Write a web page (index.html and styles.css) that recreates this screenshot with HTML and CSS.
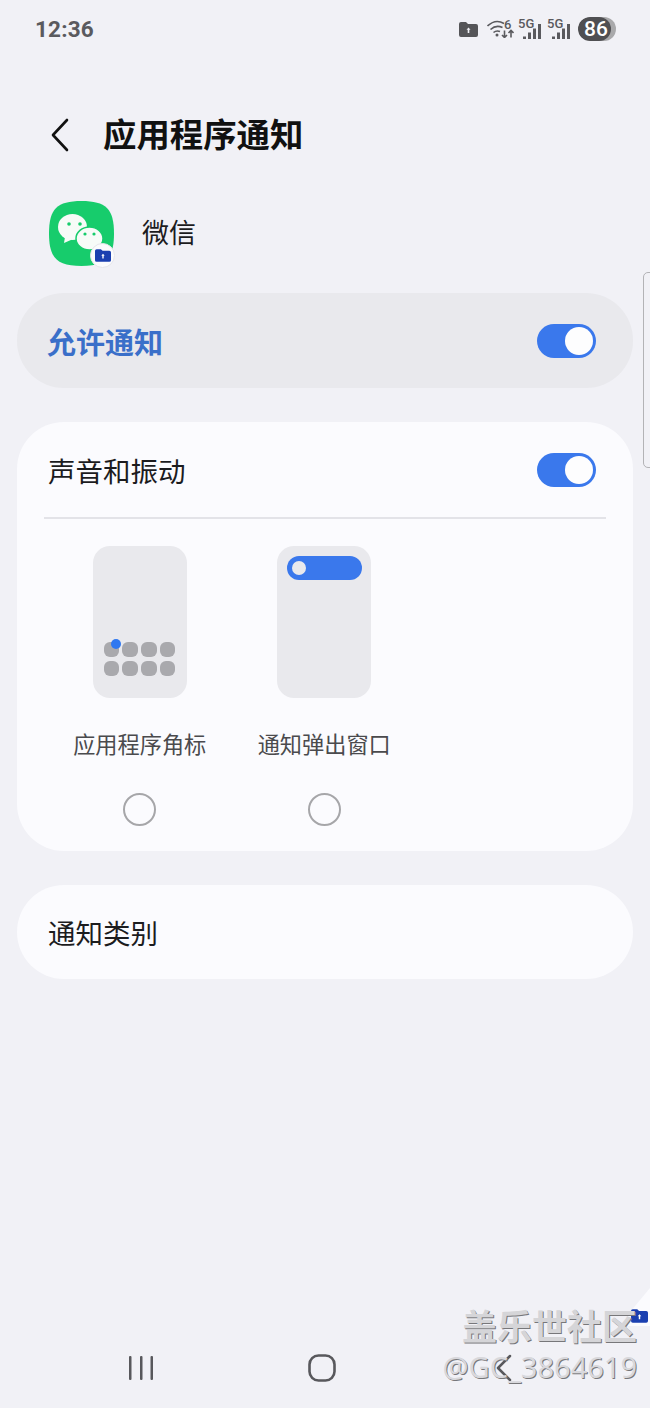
FILE: index.html
```html
<!doctype html>
<html lang="zh-CN">
  <head>
    <meta charset="utf-8">
    <title>应用程序通知</title>
    <link rel="stylesheet" href="styles.css">
  </head>
  <body>
    <div class="screen">
      <div class="statusbar">
        <span class="time">12:36</span>
        <div class="status-icons">
          <svg class="ic-folder" width="19" height="15" viewBox="0 0 19 15"><path d="M2 0h5l2 2h8a2 2 0 0 1 2 2v9a2 2 0 0 1-2 2H2a2 2 0 0 1-2-2V2a2 2 0 0 1 2-2z" fill="#555558"/><path d="M9.500 5.500l2 2.200h-1.200V11H8.700V7.700H7.500z" fill="#f1f1f6"/></svg>
          <div class="wifi">
            <svg width="27" height="18" viewBox="0 0 27 18" fill="none" stroke="#5a5a5e" stroke-width="1.600"><path d="M.5 6Q8.500-1.500 17 3.500M3.500 9.500q5.500-5 12-2M6.500 12.500q3-2.500 6.500-1"/><circle cx="10" cy="15" r="1.500" fill="#5a5a5e" stroke="none"/><path d="M17.500 10.500v7m-2.500-2.500l2.500 2.500 2.500-2.500M24 17.500v-7m-2.500 2.500l2.500-2.500 2.500 2.500"/></svg>
            <span class="wifi-six">6</span>
          </div>
          <div class="signal">
            <span class="five-g">5G</span>
            <svg width="19" height="15" viewBox="0 0 19 15" fill="#5a5a5e"><rect x="0" y="12.500" width="3" height="2.500"/><rect x="5" y="8.500" width="3" height="6.500"/><rect x="10" y="4.500" width="3" height="10.500"/><rect x="15" y="0" width="3" height="15"/></svg>
          </div>
          <div class="signal">
            <span class="five-g">5G</span>
            <svg width="19" height="15" viewBox="0 0 19 15" fill="#5a5a5e"><rect x="0" y="12.500" width="3" height="2.500"/><rect x="5" y="8.500" width="3" height="6.500"/><rect x="10" y="4.500" width="3" height="10.500"/><rect x="15" y="0" width="3" height="15"/></svg>
          </div>
          <div class="battery"><span>86</span></div>
        </div>
      </div>

      <div class="header">
        <svg class="back" width="20" height="34" viewBox="0 0 20 34" fill="none" stroke="#111" stroke-width="2.600" stroke-linecap="round" stroke-linejoin="round"><path d="M17 2L3 17l14 15"/></svg>
        <h1>应用程序通知</h1>
      </div>

      <div class="app-row">
        <div class="app-icon">
          <svg width="65" height="65" viewBox="0 0 65 65">
            <path d="M32.500 0C57 0 65 8 65 32.500S57 65 32.500 65 0 57 0 32.500 8 0 32.500 0z" fill="#17cc6c"/>
            <ellipse cx="23.500" cy="26" rx="14.500" ry="13" fill="#f7fbf8"/>
            <path d="M16 36l-1 6 8-3.500z" fill="#f7fbf8"/>
            <circle cx="20" cy="23" r="1.800" fill="#17cc6c"/>
            <circle cx="31" cy="23" r="1.800" fill="#17cc6c"/>
            <ellipse cx="40.500" cy="37.500" rx="13.500" ry="11.500" fill="#f7fbf8" stroke="#17cc6c" stroke-width="1.500"/>
            <circle cx="36" cy="33" r="1.600" fill="#17cc6c"/>
            <circle cx="45" cy="33" r="1.600" fill="#17cc6c"/>
          </svg>
          <div class="app-badge">
            <svg width="16" height="13" viewBox="0 0 19 15"><path d="M2 0h5l2 2h8a2 2 0 0 1 2 2v9a2 2 0 0 1-2 2H2a2 2 0 0 1-2-2V2a2 2 0 0 1 2-2z" fill="#1a3fb0"/><path d="M9.500 5.500l2 2.200h-1.200V11H8.700V7.700H7.500z" fill="#fff"/></svg>
          </div>
        </div>
        <span class="app-name">微信</span>
      </div>

      <div class="card card-allow">
        <span class="allow-label">允许通知</span>
        <div class="toggle"><i></i></div>
      </div>

      <div class="card-sound">
        <div class="sound-row">
          <span class="row-label">声音和振动</span>
          <div class="toggle"><i></i></div>
        </div>
        <div class="divider"></div>
        <div class="options">
          <div class="option">
            <div class="mock mock-badge">
              <div class="dots">
                <i></i><i></i><i></i><i></i><i></i><i></i><i></i><i></i>
                <b class="dot-blue"></b>
              </div>
            </div>
            <span class="option-label">应用程序角标</span>
            <div class="radio"></div>
          </div>
          <div class="option">
            <div class="mock">
              <div class="pill"><i></i></div>
            </div>
            <span class="option-label">通知弹出窗口</span>
            <div class="radio"></div>
          </div>
        </div>
      </div>

      <div class="card card-category">
        <span class="row-label">通知类别</span>
      </div>

      <div class="spacer"></div>

      <div class="navbar">
        <svg width="26" height="26" viewBox="0 0 26 26" fill="#58585c"><rect x="1" y="1" width="2.500" height="24" rx="1"/><rect x="12" y="1" width="2.500" height="24" rx="1"/><rect x="22.500" y="1" width="2.500" height="24" rx="1"/></svg>
        <svg width="28" height="28" viewBox="0 0 28 28" fill="none" stroke="#58585c" stroke-width="2.600"><rect x="1.500" y="1.500" width="25" height="25" rx="9"/></svg>
        <svg class="nav-back" width="18" height="28" viewBox="0 0 18 28" fill="none" stroke="#58585c" stroke-width="2.500" stroke-linecap="round" stroke-linejoin="round"><path d="M15 2L3 14l12 12"/></svg>
      </div>

      <!-- overlays: scroll handle, corner fold, watermark -->
      <div class="scroll-handle"></div>
      <div class="corner"></div>
      <svg class="corner-folder" width="17" height="14" viewBox="0 0 19 15"><path d="M2 0h5l2 2h8a2 2 0 0 1 2 2v9a2 2 0 0 1-2 2H2a2 2 0 0 1-2-2V2a2 2 0 0 1 2-2z" fill="#1a3fb0"/><path d="M9.500 5.500l2 2.200h-1.200V11H8.700V7.700H7.500z" fill="#fff"/></svg>
      <div class="watermark">
        <div class="wm-title">盖乐世社区</div>
        <div class="wm-user">@GC_3864619</div>
      </div>
    </div>
  </body>
</html>
```

FILE: styles.css
```css
* { box-sizing: border-box; }

html, body {
  margin: 0;
  padding: 0;
}

body {
  background: #f1f1f6;
  font-family: "Noto Sans CJK SC", "Noto Sans", sans-serif;
  color: #1a1a1c;
}

.screen {
  position: relative;
  width: 650px;
  height: 1408px;
  overflow: hidden;
  display: flex;
  flex-direction: column;
  background: #f1f1f6;
}

/* status bar */
.statusbar {
  height: 58px;
  padding: 0 34px 0 35px;
  display: flex;
  align-items: center;
  justify-content: space-between;
  flex-shrink: 0;
}

.time {
  font-family: Roboto, sans-serif;
  font-weight: 700;
  font-size: 22.500px;
  color: #5a5a5e;
  letter-spacing: .2px;
}

.status-icons {
  display: flex;
  align-items: center;
}

.ic-folder { margin-right: 9px; }

.wifi {
  position: relative;
  width: 27px;
  height: 18px;
  margin-right: 4px;
}

.wifi svg { display: block; }

.wifi-six {
  position: absolute;
  left: 17px;
  top: -1px;
  font-family: Roboto, sans-serif;
  font-size: 13px;
  font-weight: 500;
  line-height: 12px;
  color: #5a5a5e;
}

.signal {
  position: relative;
  width: 24px;
  height: 20px;
  margin-right: 5px;
  display: flex;
  align-items: flex-end;
  justify-content: flex-end;
}

.five-g {
  position: absolute;
  left: 0;
  top: -1px;
  font-family: Roboto, sans-serif;
  font-size: 13px;
  font-weight: 500;
  line-height: 12px;
  color: #5a5a5e;
}

.battery {
  width: 38px;
  height: 24px;
  margin-left: 2px;
  border-radius: 12px;
  background: #a9a9ab;
  overflow: hidden;
}

.battery span {
  display: block;
  width: 33px;
  height: 24px;
  padding-left: 3px;
  border-radius: 12px;
  background: #4f4f52;
  color: #fff;
  font-family: Roboto, sans-serif;
  font-weight: 500;
  font-size: 21px;
  line-height: 24px;
  text-align: center;
}

/* header */
.header {
  height: 44px;
  margin-top: 55px;
  padding-left: 50px;
  display: flex;
  align-items: center;
  flex-shrink: 0;
}

.back { flex-shrink: 0; }

h1 {
  margin: -4px 0 0 33px;
  font-size: 33.400px;
  font-weight: 700;
  line-height: 44px;
  color: #111;
}

/* app row */
.app-row {
  height: 65px;
  margin-top: 44px;
  padding-left: 49px;
  display: flex;
  align-items: center;
  flex-shrink: 0;
}

.app-icon {
  position: relative;
  width: 65px;
  height: 65px;
}

.app-icon svg { display: block; }

.app-badge {
  position: absolute;
  right: -1px;
  bottom: -2px;
  width: 25px;
  height: 25px;
  border-radius: 50%;
  background: #fbfbfd;
  border: 1px solid #e6e6ea;
  display: flex;
  align-items: center;
  justify-content: center;
}

.app-name {
  margin: -4px 0 0 28px;
  font-size: 27px;
  line-height: 40px;
  color: #1c1c1e;
}

/* cards */
.card {
  width: 616px;
  height: 95px;
  margin-left: 17px;
  padding: 0 37px 0 31px;
  border-radius: 47px;
  display: flex;
  align-items: center;
  justify-content: space-between;
  flex-shrink: 0;
}

.card-allow {
  margin-top: 27px;
  background: #e9e9ed;
}

.allow-label {
  margin-left: -1px;
  font-size: 29px;
  font-weight: 700;
  color: #3a6fc9;
}

.row-label {
  font-size: 27.500px;
  color: #1c1c1e;
}

.toggle {
  position: relative;
  width: 59px;
  height: 34px;
  border-radius: 17px;
  background: #3a78ec;
}

.toggle i {
  position: absolute;
  right: 3px;
  top: 3px;
  width: 28px;
  height: 28px;
  border-radius: 50%;
  background: #fdfdfe;
}

.card-sound {
  width: 616px;
  height: 429px;
  margin: 34px 0 0 17px;
  background: #fbfbfe;
  border-radius: 47px;
  flex-shrink: 0;
}

.sound-row {
  height: 95px;
  padding: 0 37px 0 31px;
  display: flex;
  align-items: center;
  justify-content: space-between;
}

.divider {
  height: 2px;
  margin: 0 27px;
  background: #e3e3e8;
}

.options {
  padding: 27px 0 0 30.500px;
  display: flex;
}

.option {
  width: 184.500px;
  display: flex;
  flex-direction: column;
  align-items: center;
}

.mock {
  width: 94px;
  height: 152px;
  padding: 10px;
  border-radius: 17px;
  background: #e9e9ed;
}

.mock-badge {
  display: flex;
  align-items: flex-end;
  padding: 0 11px 22px 11px;
}

.dots {
  position: relative;
  display: grid;
  grid-template-columns: repeat(4, 15.500px);
  gap: 3.200px;
}

.dots i {
  height: 15.500px;
  border-radius: 6px;
  background: #a9a9ad;
}

.dot-blue {
  position: absolute;
  left: 7.500px;
  top: -3px;
  width: 10px;
  height: 10px;
  border-radius: 50%;
  background: #2f78f0;
}

.pill {
  width: 75px;
  height: 24px;
  border-radius: 12px;
  background: #3a78ec;
  padding: 5px;
}

.pill i {
  display: block;
  width: 14px;
  height: 14px;
  border-radius: 50%;
  background: #e9e9ed;
}

.option-label {
  margin-top: 29px;
  font-size: 22.200px;
  line-height: 32px;
  color: #4a4a4d;
  white-space: nowrap;
}

.radio {
  width: 33px;
  height: 33px;
  margin-top: 34px;
  border-radius: 50%;
  border: 2px solid #a6a6a9;
}

.card-category {
  height: 94px;
  margin-top: 34px;
  background: #fbfbfe;
}

.spacer { flex: 1; }

/* nav bar */
.navbar {
  height: 28px;
  margin-bottom: 26px;
  padding-left: 128px;
  display: flex;
  align-items: center;
  gap: 154px;
  flex-shrink: 0;
}

.nav-back { margin-left: 5px; }

/* overlays */
.scroll-handle {
  position: absolute;
  left: 643px;
  top: 272px;
  width: 12px;
  height: 196px;
  border: 1.500px solid #b3b3b6;
  border-radius: 5px;
  background: #f1f1f6;
}

.corner {
  position: absolute;
  right: 0;
  top: 1288px;
  width: 22px;
  height: 38px;
  background: #fbfbfe;
  clip-path: polygon(100% 0, 100% 100%, 0 100%, 0 70%);
}

.corner-folder {
  position: absolute;
  left: 631px;
  top: 1309px;
}

.watermark {
  position: absolute;
  right: 13px;
  top: 1304px;
  text-align: right;
}

.wm-title {
  font-size: 35px;
  font-weight: 700;
  line-height: 42px;
  color: #d5d5d8;
  text-shadow: 1px 1px 0 #77777a;
  white-space: nowrap;
}

.wm-user {
  font-family: "Noto Sans", sans-serif;
  font-size: 29px;
  line-height: 42px;
  color: #d8d8dc;
  text-shadow: 1px 1px 0 #77777a;
  white-space: nowrap;
}
```
